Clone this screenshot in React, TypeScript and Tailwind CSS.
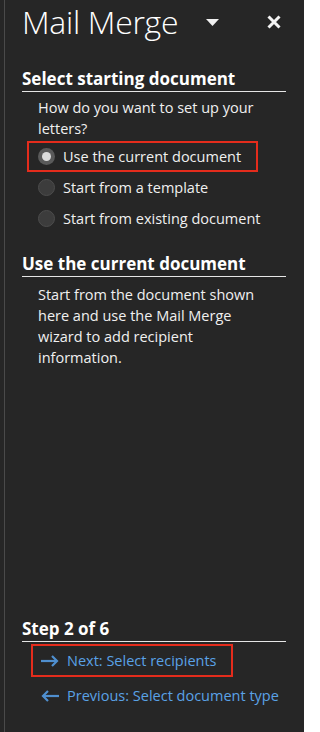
// @ts-nocheck
const font = { fontFamily: '"Open Sans", "Noto Sans", sans-serif' };

function Radio({ checked }: { checked?: boolean }) {
  return checked ? (
    <span className="flex h-[17px] w-[17px] items-center justify-center rounded-full bg-[#5a5a5a]">
      <span className="h-[9px] w-[9px] rounded-full bg-[#dcdcdc]" />
    </span>
  ) : (
    <span className="h-[17px] w-[17px] rounded-full border border-[#4c4c4c] bg-[#3c3c3c]" />
  );
}

function Heading({ children }: { children: React.ReactNode }) {
  return (
    <div className="border-b border-[#e6e6e6] pb-[1px] text-[17px] font-bold leading-[22px] text-white">
      {children}
    </div>
  );
}

function Arrow({ dir }: { dir: "left" | "right" }) {
  return (
    <svg width="18" height="14" viewBox="0 0 18 14" fill="none" stroke="#4f8fcf" strokeWidth="2.2" strokeLinecap="square">
      {dir === "right" ? (
        <>
          <path d="M1 7h14" />
          <path d="M11 2l5 5-5 5" strokeLinecap="butt" />
        </>
      ) : (
        <>
          <path d="M3 7h14" />
          <path d="M7 2L2 7l5 5" strokeLinecap="butt" />
        </>
      )}
    </svg>
  );
}

export default function App() {
  const options = [
    { label: "Use the current document", checked: true },
    { label: "Start from a template" },
    { label: "Start from existing document" },
  ];

  return (
    <div className="h-[732px] w-[304px] overflow-hidden bg-[#262626] pl-[4px]" style={font}>
      <div className="flex h-full flex-col border-l border-[#4a4a4a] pl-[17px] pr-[18px] text-[#f0f0f0]">
        {/* header */}
        <div className="flex h-[44px] items-center">
          <div className="text-[32px] font-light leading-[40px] tracking-[-0.3px] text-white">Mail Merge</div>
          <svg className="ml-[28px]" width="13" height="7" viewBox="0 0 13 7">
            <path d="M0 0h13L6.5 7z" fill="#f0f0f0" />
          </svg>
          <svg className="ml-[48px]" width="14" height="14" viewBox="0 0 14 14" stroke="#f4f4f4" strokeWidth="3">
            <path d="M1.5 1.5l11 11M12.5 1.5l-11 11" />
          </svg>
        </div>

        <div className="mt-[24px]">
          <Heading>Select starting document</Heading>
          <p className="mt-[5px] pl-[16px] text-[14.5px] leading-[21px]">
            How do you want to set up your letters?
          </p>
          <div className="mt-[2px] flex flex-col">
            {options.map((o) => (
              <div
                key={o.label}
                className={
                  "ml-[5px] flex h-[31px] items-center gap-[8px] border-2 pl-[9px] text-[14.5px] " +
                  (o.checked ? "w-[231px] border-[#e42c1c]" : "border-transparent")
                }
              >
                <Radio checked={o.checked} />
                <span>{o.label}</span>
              </div>
            ))}
          </div>
        </div>

        <div className="mt-[19px]">
          <Heading>Use the current document</Heading>
          <p className="mt-[7px] pl-[16px] pr-[10px] text-[14.5px] leading-[21px]">
            Start from the document shown here and use the Mail Merge wizard to add recipient information.
          </p>
        </div>

        <div className="mt-auto mb-[17px]">
          <Heading>Step 2 of 6</Heading>
          <div className="mt-[2px] ml-[9px] flex h-[33px] w-[202px] items-center gap-[8px] border-2 border-[#e42c1c] pl-[8px] text-[14.5px] text-[#5aa2e6]">
            <Arrow dir="right" />
            <span>Next: Select recipients</span>
          </div>
          <div className="ml-[9px] flex h-[38px] items-center gap-[8px] pl-[10px] text-[14.5px] text-[#5aa2e6]">
            <Arrow dir="left" />
            <span className="whitespace-nowrap">Previous: Select document type</span>
          </div>
        </div>
      </div>
    </div>
  );
}
